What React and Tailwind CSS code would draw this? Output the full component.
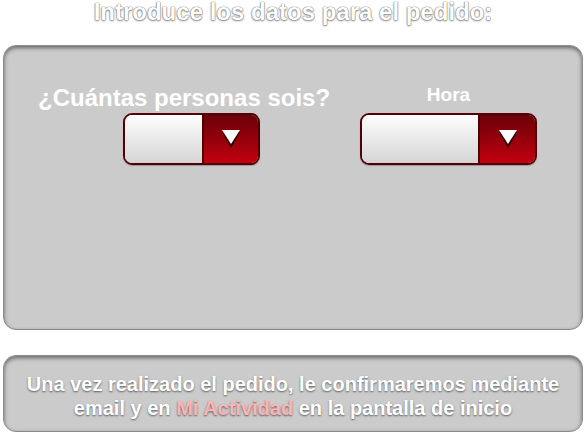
import React from "react";

function Select({ leftW, rightW }) {
  return (
    <div className="flex h-[52px] rounded-[9px] border-2 border-[#520006] overflow-hidden shadow-[0_1px_1px_rgba(0,0,0,0.25)]">
      <div
        className="h-full bg-gradient-to-b from-[#fdfdfd] to-[#d5d5d5] border-r-2 border-[#4a0004]"
        style={{ width: leftW }}
      />
      <div
        className="h-full flex items-center justify-center bg-gradient-to-b from-[#6a0008] to-[#c3000f]"
        style={{ width: rightW }}
      >
        <svg width="22" height="22" viewBox="0 0 22 22" className="mt-[1px]">
          <polygon points="2,3 20,3 11,19" fill="#1a0000" opacity="0.85" />
          <polygon points="2,1 20,1 11,15" fill="#ffffff" />
        </svg>
      </div>
    </div>
  );
}

export default function App() {
  return (
    <div className="w-[586px] h-[435px] bg-white overflow-hidden font-['Liberation_Sans',Arial,sans-serif]">
      <div className="h-[45px] text-center text-[24px] leading-[24px] font-bold text-white [text-shadow:0_0_1px_#6f6f6f,0_0_1px_#6f6f6f,0_1px_2px_rgba(0,0,0,0.45)]">
        Introduce los datos para el pedido:
      </div>
      <div className="mx-[3px] h-[285px] rounded-[13px] bg-[#cbcbcb] border border-[#8a8a8a] shadow-[inset_0_2px_4px_rgba(0,0,0,0.5)] pt-[38px] pl-[34px] flex">
        <div className="w-[322px] flex flex-col">
          <div className="h-[29px] text-[24px] leading-[28px] font-bold text-white">
            ¿Cuántas personas sois?
          </div>
          <div className="ml-[85px] w-[137px]">
            <Select leftW={79} rightW={54} />
          </div>
        </div>
        <div className="w-[177px] flex flex-col">
          <div className="h-[29px] text-center text-[19px] leading-[22px] font-bold text-white">
            Hora
          </div>
          <Select leftW={118} rightW={55} />
        </div>
      </div>
      <div className="mt-[25px] mx-[3px] h-[77px] rounded-[13px] bg-[#cbcbcb] border border-[#8a8a8a] shadow-[inset_0_2px_4px_rgba(0,0,0,0.5)] pt-[16px] text-center text-[20px] leading-[24px] font-bold text-white [text-shadow:0_1px_2px_rgba(0,0,0,0.55)]">
        Una vez realizado el pedido, le confirmaremos mediante
        <br />
        email y en <span className="text-[#ffb3b3]">Mi Actividad</span> en la pantalla de inicio
      </div>
    </div>
  );
}
